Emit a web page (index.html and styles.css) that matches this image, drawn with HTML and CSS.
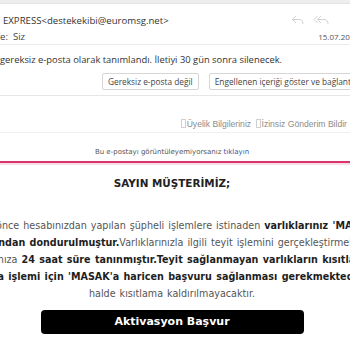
FILE: index.html
```html
<!DOCTYPE html>
<html lang="tr">
<head>
  <meta charset="UTF-8">
  <meta name="viewport" content="width=device-width, initial-scale=1.0">
  <title>Gelen Kutusu</title>
  <link rel="stylesheet" href="styles.css">
</head>
<body>
  <div id="reader">
    <div class="topbar"></div>

    <div class="msg-head">
      <div class="head-row">
        <span class="sender">EXPRESS&lt;destekekibi@euromsg.net&gt;</span>
        <span class="actions">
          <svg width="14" height="12" viewBox="0 0 14 12"><path d="M5 2 L1.5 5.5 L5 9 M1.5 5.5 H8 Q12 5.5 12 10" fill="none" stroke="#d2d2d2" stroke-width="1"/></svg>
          <svg width="17" height="12" viewBox="0 0 17 12"><path d="M4.5 2 L1 5.5 L4.5 9 M8 2 L4.5 5.5 L8 9 M4.5 5.5 H11 Q15 5.5 15 10" fill="none" stroke="#d2d2d2" stroke-width="1"/></svg>
        </span>
      </div>
      <div class="head-row">
        <span class="to">e:&nbsp; Siz</span>
        <span class="date">15.07.2024</span>
      </div>
    </div>

    <div class="junk">
      <p>gereksiz e-posta olarak tanımlandı. İletiyi 30 gün sonra silenecek.</p>
      <div class="junk-actions">
        <button class="junk-btn">Gereksiz e-posta değil</button>
        <button class="junk-btn">Engellenen içeriği göster ve bağlantıları etkinleştir</button>
      </div>
    </div>

    <div class="mail">
      <div class="mail-links">
        <span class="link"><i class="broken"></i>Üyelik Bilgileriniz</span>
        <span class="link"><i class="broken"></i>İzinsiz Gönderim Bildir</span>
        <span class="link"><i class="broken"></i>Üyelikten Çık</span>
      </div>
      <div class="view-online">Bu e-postayı görüntüleyemiyorsanız <a href="#">tıklayın</a></div>

      <div class="mail-body">
        <h1>SAYIN MÜŞTERİMİZ;</h1>
        <p>
          <span class="line">Daha önce hesabınızdan yapılan şüpheli işlemlere istinaden <b>varlıklarınız 'MASAK'</b></span>
          <span class="line"><b>tarafından dondurulmuştur.</b>Varlıklarınızla ilgili teyit işlemini gerçekleştirmek için</span>
          <span class="line">tarafınıza <b>24 saat süre tanınmıştır.Teyit sağlanmayan varlıkların kısıtlama</b></span>
          <span class="line"><b>kaldırma işlemi için 'MASAK'a haricen başvuru sağlanması gerekmektedir.</b> Aksi</span>
          <span class="line">halde kısıtlama kaldırılmayacaktır.</span>
        </p>
        <a class="cta" href="#">Aktivasyon Başvur</a>
      </div>
    </div>
  </div>
</body>
</html>
```

FILE: styles.css
```css
html, body {
  margin: 0;
  background: #fff;
  overflow: hidden;
}
body {
  font-family: "Open Sans", sans-serif;
  color: #333;
}
#reader {
  width: 366px;
}
.topbar {
  height: 3px;
  background: #eeeeee;
  border-bottom: 1px solid #e4e4e4;
}
.msg-head {
  padding: 8px 0 0 0;
  border-bottom: 1px solid #ececec;
}
.head-row {
  display: flex;
  justify-content: space-between;
  align-items: center;
  height: 16px;
  font-size: 9.6px;
}
.sender {
  padding-left: 3px;
  color: #333;
}
.actions {
  display: flex;
  gap: 8px;
  padding-right: 36px;
}
.to {
  color: #444;
}
.date {
  color: #555;
  font-size: 8px;
  padding-right: 7px;
}
.junk {
  padding: 8px 0 5px 0;
  border-bottom: 1px solid #e6e6e6;
}
.junk p {
  margin: 0;
  font-size: 9.4px;
  line-height: 14px;
  color: #333;
  white-space: nowrap;
}
.junk-actions {
  display: flex;
  gap: 10px;
  margin-top: 6px;
  padding-left: 102px;
  white-space: nowrap;
}
.junk-btn {
  height: 17px;
  padding: 0 5px;
  font-family: "Open Sans", sans-serif;
  font-size: 8.3px;
  color: #444;
  background: #fff;
  border: 1px solid #d6d6d6;
  border-radius: 2px;
}
.mail {
  width: 600px;
  margin-left: -128px;
}
.mail-links {
  padding: 22px 64px 2px 0;
  text-align: right;
  border-bottom: 1px solid #efefef;
  font-family: "Liberation Sans", Arial, sans-serif;
  font-size: 8.6px;
  line-height: 12px;
  color: #8c8c8c;
  white-space: nowrap;
}
.link {
  margin-left: 2px;
}
.broken {
  display: inline-block;
  width: 3px;
  height: 7px;
  margin-right: 1px;
  border: 1px solid #d0d0d0;
  vertical-align: -1px;
}
.view-online {
  padding: 13px 0 3px 0;
  text-align: center;
  font-family: "DejaVu Sans", Verdana, sans-serif;
  font-size: 7px;
  line-height: 12px;
  color: #555;
  border-bottom: 2px solid #d9346b;
  box-shadow: 0 2px 0 #f7dbe5;
}
.view-online a {
  color: #3a55a8;
  text-decoration: none;
}
.mail-body {
  padding-top: 13px;
  text-align: center;
  font-family: "DejaVu Sans", Verdana, sans-serif;
}
.mail-body h1 {
  margin: 0;
  font-size: 10.4px;
  line-height: 14px;
  color: #222;
}
.mail-body p {
  margin: 27px 0 0 0;
  font-size: 9.6px;
  line-height: 17px;
  color: #555;
  word-spacing: 1px;
}
.line {
  display: block;
  white-space: nowrap;
}
.mail-body b {
  color: #1e1e1e;
}
.cta {
  display: block;
  width: 263px;
  height: 24px;
  margin: 8px auto 0 auto;
  background: #000;
  border-radius: 4px;
  color: #fff;
  font-size: 11px;
  font-weight: bold;
  line-height: 24px;
  text-decoration: none;
}
```
